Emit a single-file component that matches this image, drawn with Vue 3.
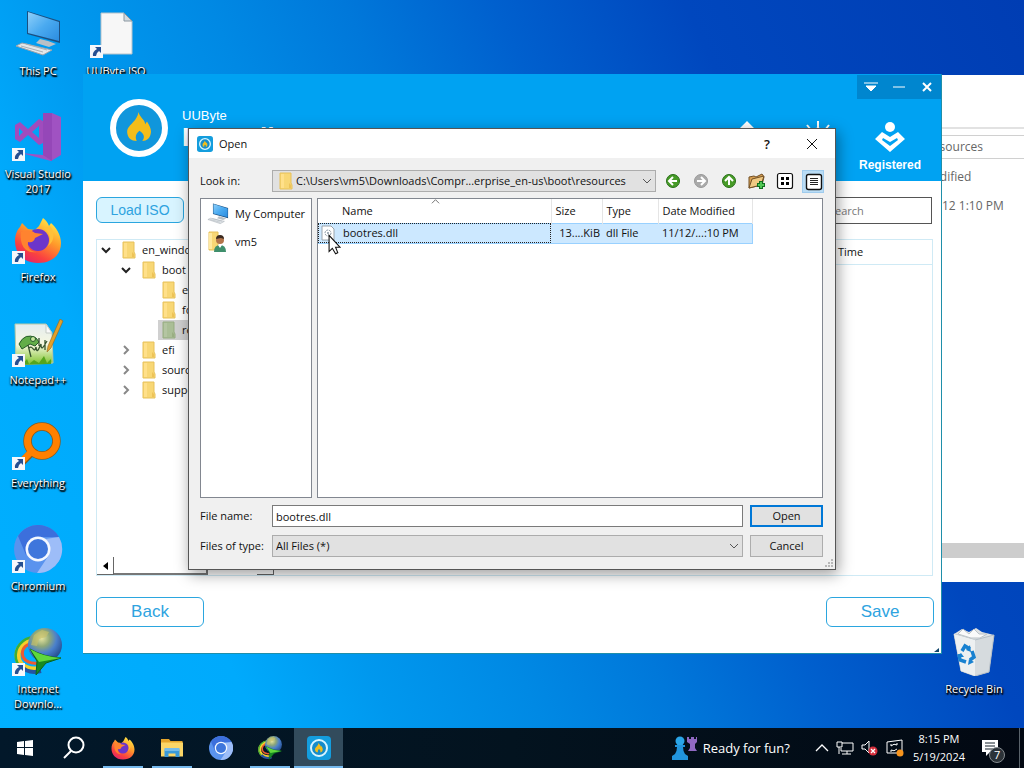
<script setup>
import { ref } from 'vue'

const path = ref('C:\\Users\\vm5\\Downloads\\Compr...erprise_en-us\\boot\\resources')
const fileName = ref('bootres.dll')
const fileType = ref('All Files (*)')
const search = ref('')

const shortcuts = [
  { icon: 'pc', label: 'This PC', link: false },
  { icon: 'vs', label: 'Visual Studio 2017', link: true },
  { icon: 'firefox', label: 'Firefox', link: true },
  { icon: 'notepad', label: 'Notepad++', link: true },
  { icon: 'everything', label: 'Everything', link: true },
  { icon: 'chromium', label: 'Chromium', link: true },
  { icon: 'idm', label: 'Internet Downlo...', link: true },
  { icon: 'page', label: 'UUByte ISO Editor', link: true }
]
const tree = [
  { name: 'en_windows', level: 0, state: 'open' },
  { name: 'boot', level: 1, state: 'open' },
  { name: 'en-us', level: 2, state: '' },
  { name: 'fonts', level: 2, state: '' },
  { name: 'resources', level: 2, state: '', selected: true },
  { name: 'efi', level: 1, state: 'closed' },
  { name: 'sources', level: 1, state: 'closed' },
  { name: 'support', level: 1, state: 'closed' }
]
const apps = [
  { icon: 'firefox', title: 'Firefox', running: true },
  { icon: 'explorer', title: 'File Explorer', running: true },
  { icon: 'chromium', title: 'Chromium', running: false },
  { icon: 'idm', title: 'Internet Download Manager', running: true },
  { icon: 'uubyte', title: 'UUByte ISO Editor', running: true, active: true }
]
</script>

<template>
  <svg class="defs" width="0" height="0" aria-hidden="true">
    <defs>
      <linearGradient id="gFox" x1="0.8" y1="0" x2="0.2" y2="1">
        <stop offset="0" stop-color="#fff04a" /><stop offset="0.4" stop-color="#ff9a2a" />
        <stop offset="0.75" stop-color="#fa4040" /><stop offset="1" stop-color="#e02070" />
      </linearGradient>
      <radialGradient id="gGlobe" cx="0.4" cy="0.3" r="0.8">
        <stop offset="0" stop-color="#e9e6a0" /><stop offset="0.3" stop-color="#8fa878" />
        <stop offset="0.55" stop-color="#4a80cc" /><stop offset="1" stop-color="#173a78" />
      </radialGradient>
      <linearGradient id="gScreen" x1="0" y1="0" x2="1" y2="1">
        <stop offset="0" stop-color="#8fd0fa" /><stop offset="0.5" stop-color="#4aaaf0" /><stop offset="1" stop-color="#2b8ce0" />
      </linearGradient>
      <linearGradient id="gNote" x1="0" y1="0" x2="0" y2="1">
        <stop offset="0" stop-color="#e4ecf0" /><stop offset="0.5" stop-color="#f6f8e0" /><stop offset="1" stop-color="#7cc22a" />
      </linearGradient>
    </defs>
    <symbol id="pc" viewBox="0 0 48 48">
      <path d="M13 1 46 11v22L13 24z" fill="#1b4f80" />
      <path d="M14 2 45 12v19L14 23z" fill="url(#gScreen)" />
      <path d="M26 29 34 31 42 34 35 37 22 33z" fill="#b9c0c6" />
      <path d="M8 33 38 40 29 45 2 36z" fill="#e3e7ea" stroke="#9aa3ab" />
      <path d="m7 36 22 6m-17-8 21 6" stroke="#a8b0b6" fill="none" />
    </symbol>
    <symbol id="page" viewBox="0 0 48 48">
      <path d="M9 3h23l8 8v33H9z" fill="#f7f7f7" stroke="#b6c3cb" />
      <path d="M32 3v8h8z" fill="#d5dbe0" stroke="#8b98a2" />
    </symbol>
    <symbol id="vs" viewBox="0 0 48 48">
      <path d="M29 0h9l9 4v38l-10 6L7 40l22 2 4-4V4z" fill="#a052c2" />
      <path d="M29 0h9v48l-9-6z" fill="#9547b8" />
      <path d="M1 12 6 9l8 7L25 6l4 2v22l-4 2-11-10-8 7-5-3zm4 3v8l4-4zm13 4 7 6V13z" fill="#a04cbd" fill-rule="evenodd" />
    </symbol>
    <symbol id="firefox" viewBox="0 0 48 48">
      <path d="M24 47C9 47 1 37 1 25c0-6 2-11 5-14l2-4 6 6 7 1 4-4 4-8c3 2 5 5 6 8l2-3c5 4 10 12 10 20 0 12-9 20-23 20z" fill="url(#gFox)" />
      <circle cx="24" cy="24" r="11" fill="#6c35ca" />
      <path d="M7 16c6-3 11-2 14 1l8 1-8 4c-1 4-4 5-7 4-1 6 3 10 9 10-10 2-18-5-16-20z" fill="#ff832f" />
      <path d="M29 12c7 3 9 12 5 18 8-6 6-16 2-20z" fill="#ffc03a" />
    </symbol>
    <symbol id="notepad" viewBox="0 0 48 48">
      <path d="M1 5h31l6 9 1 30-37 2z" fill="url(#gNote)" stroke="#b9c9a6" />
      <path d="M32 5v9h6z" fill="#fafafa" stroke="#c5cbc4" />
      <path d="M5 25q6-12 17-6l3 4-4 4-5-2-8 5z" fill="#62ad48" stroke="#245b27" />
      <circle cx="19" cy="20" r="2.5" fill="#c8e89d" stroke="#275b2b" />
      <path d="m14 26 3 12m-2-9c4-4 5 7 7-1 1 8 3 1 5-3 0 8 3 2 6-3m-2-1v10m-6-12v8" fill="none" stroke="#35532e" stroke-width="1.3" />
      <path d="m4 46 2-8 3 7 4-5 2 5 5-4 5 3 5-7 3 7 4-4v5z" fill="#55a51e" />
      <path d="m46 0 3 2-12 27-4 4 1-6z" fill="#e2a02a" stroke="#94631f" stroke-width="0.6" />
    </symbol>
    <symbol id="everything" viewBox="0 0 48 48">
      <circle cx="28" cy="19" r="14.5" fill="none" stroke="#8a5a1d" stroke-width="8.5" />
      <path d="m18 30-11 11" stroke="#8a5a1d" stroke-width="8" />
      <circle cx="28" cy="19" r="14.5" fill="none" stroke="#ff8000" stroke-width="7" />
      <path d="m18 29-12 12" stroke="#ff8000" stroke-width="6.5" />
    </symbol>
    <symbol id="chromium" viewBox="0 0 48 48">
      <circle cx="24" cy="24" r="24" fill="#5a93ee" />
      <path d="M4 11A24 24 0 0 1 45 12H24L12 30z" fill="#3c6fdc" />
      <path d="M45 12A24 24 0 0 1 23 48l12-18-4-16z" fill="#9dbdf8" />
      <circle cx="24" cy="24" r="12.5" fill="#f4f8ff" />
      <circle cx="24" cy="24" r="10" fill="#3e76dc" />
    </symbol>
    <symbol id="idm" viewBox="0 0 48 48">
      <path d="M21 12C8 13 2 21 4 31c2 8 12 12 22 10" fill="none" stroke="#f4d02b" stroke-width="6" />
      <path d="M20 9C8 10 0 20 2 31c1 5 5 9 10 11" fill="none" stroke="#3eae36" stroke-width="2.5" />
      <path d="M19 15C10 17 7 22 9 29c2 4 8 7 14 6" fill="none" stroke="#ec5b32" stroke-width="3" />
      <path d="M7 38c5 6 12 7 20 5" fill="none" stroke="#2453a3" stroke-width="4" />
      <circle cx="31" cy="17" r="17" fill="url(#gGlobe)" />
      <path d="m20 7 8-5 7 2-3 5-7 2-2 7-6-1z" fill="#c8c06a" opacity="0.65" />
      <path d="M16 21q14 8 31 9l-15 5-10 12 1-14z" fill="#178a22" stroke="#0b641d" />
      <path d="M16 21q14 8 31 9l-22 4z" fill="#5fd83c" />
    </symbol>
    <symbol id="bin" viewBox="0 0 48 48">
      <path d="m4 6 8-5 7 3 7-4 6 4 12 3-5 37-14 4-14-5z" fill="#e0e3e5" />
      <path d="m4 6 21 6 19-5-5 37-14 4-14-5z" fill="#d6dbde" stroke="#b6bfc6" />
      <path d="m4 6 21 6v36l-14-5z" fill="#edf0f1" />
      <path d="m8 6 5-5 6 5 5-5 5 5 8 0-7 4-9 0z" fill="#fafafa" stroke="#bcc3c8" />
      <path d="m12 23 3-5 5 3m2 2 2 6-4 3m-4 2-6-2-1-6" stroke="#1881d0" stroke-width="3.5" fill="none" />
      <path d="m20 17 1 7-5-2zm-1 14-1 6 6-3zM7 29l4-4 3 4z" fill="#1881d0" />
    </symbol>
    <symbol id="shortcut" viewBox="0 0 13 13">
      <path d="M0 0h13v13H0z" fill="#f5f7fb" />
      <path d="M5 2h6v6L9 6Q6 8 6 11H3Q2 7 7 4z" fill="#264f91" />
    </symbol>
    <symbol id="folder" viewBox="0 0 14 18">
      <path d="M1 1h11v10l1 2v4H1z" fill="#f8d775" stroke="#e7c15a" />
      <path d="M2 2h3v14H2z" fill="#ffe08a" />
      <path d="M10 11v5h2v-3z" fill="#edc358" />
    </symbol>
    <symbol id="explorer" viewBox="0 0 48 48">
      <path d="M2 6h16l3 4h24v12H2z" fill="#e5a52b" />
      <path d="M2 13h44v28H2z" fill="#fbd667" />
      <path d="M9 27h30v15h-8v-7H17v7H9z" fill="#3a9ad9" />
      <path d="M9 24h30v6H9z" fill="#76bce8" />
    </symbol>
    <symbol id="uubyte" viewBox="0 0 48 48">
      <rect width="48" height="48" rx="8" fill="#149ddd" />
      <circle cx="24" cy="24" r="16" fill="#168cca" stroke="#d8f5ff" stroke-width="4" />
      <use href="#flame" x="16" y="13" width="16" height="21" />
    </symbol>
    <symbol id="flame" viewBox="0 0 26 32">
      <path d="M12 0c1 6 7 8 7 13l2-3c3 5 5 9 4 13-1 5-4 8-9 8 3-4 2-8-3-11-4 3-5 7-3 11-6 0-9-3-10-8-1-6 3-8 6-12 3-3 5-6 6-11z" fill="#f2bd1a" />
    </symbol>
    <symbol id="chevron" viewBox="0 0 10 10">
      <path d="m1 3 4 4 4-4" fill="none" stroke="currentColor" />
    </symbol>
  </svg>

  <div class="screen">
    <main class="desktop">
      <div class="icons">
        <button v-for="s in shortcuts" :key="s.label" class="icon">
          <span class="art">
            <svg class="pic"><use :href="'#' + s.icon" /></svg>
            <svg v-if="s.link" class="arrow"><use href="#shortcut" /></svg>
          </span>
          <span class="label">{{ s.label }}</span>
        </button>
      </div>
      <button class="icon bin">
        <span class="art"><svg class="pic"><use href="#bin" /></svg></span>
        <span class="label">Recycle Bin</span>
      </button>

      <section class="explorer">
        <div class="ribbon"></div>
        <div class="address"><span>resources</span></div>
        <div class="dates">
          <span>Date modified</span>
          <span>11/12/2012 1:10 PM</span>
        </div>
        <div class="hbar"></div>
      </section>

      <section class="editor">
        <header class="head">
          <svg class="logo" viewBox="0 0 58 58">
            <circle cx="29" cy="29" r="26" fill="#1096dc" stroke="#fff" stroke-width="6" />
            <use href="#flame" x="17" y="13" width="25" height="30" />
          </svg>
          <div class="brand">
            <span>UUByte</span>
            <strong>ISO Editor</strong>
          </div>
          <div class="actions">
            <div class="links">
              <svg width="34" height="34" viewBox="0 0 34 34"><path d="m17 0 12 12h-7v12H12V12H5z" fill="#fff" /></svg>
              <svg width="34" height="34" viewBox="0 0 34 34">
                <circle cx="17" cy="17" r="8" fill="none" stroke="#fff" stroke-width="5" />
                <path d="M17 0v7M17 27v7M0 17h7m20 0h7M6 4l4 5m14 16 4 5M28 4l-4 5M10 25l-4 5" stroke="#fff" stroke-width="2" />
              </svg>
            </div>
            <div class="registered">
              <svg width="30" height="32" viewBox="0 0 30 32">
                <circle cx="15" cy="6" r="5" fill="#fff" />
                <path d="m7 11 8 5 8-5 7 7-15 13L0 18zm1 6-1 2 8 6 8-6-1-2-7 4z" fill="#fff" fill-rule="evenodd" />
              </svg>
              <span>Registered</span>
            </div>
          </div>
          <div class="wincontrols">
            <button aria-label="Menu"><svg viewBox="0 0 14 12"><path d="M0 2h14M2 5h10l-5 5z" fill="#fff" stroke="#fff" /></svg></button>
            <button aria-label="Minimize"><svg viewBox="0 0 14 12"><path d="M1 6h12" stroke="#fff" /></svg></button>
            <button aria-label="Close"><svg viewBox="0 0 14 12"><path d="m3 2 8 8m0-8-8 8" stroke="#fff" stroke-width="2" /></svg></button>
          </div>
        </header>
        <div class="work">
          <div class="row">
            <button class="blue load">Load ISO</button>
            <input v-model="search" class="search" aria-label="Search" placeholder="Search">
          </div>
          <div class="panes">
            <div class="treepane">
              <ul class="tree">
                <li v-for="n in tree" :key="n.name" :class="['l' + n.level, { selected: n.selected }]">
                  <svg v-if="n.state" :class="['twist', n.state]"><use href="#chevron" /></svg>
                  <span class="node"><svg class="folder"><use href="#folder" /></svg>{{ n.name }}</span>
                </li>
              </ul>
              <div class="scroll">
                <span class="sbtn"><svg width="5" height="8" viewBox="0 0 5 8"><path d="M5 0v8L0 4z" /></svg></span>
                <span class="thumb"></span>
                <span class="sbtn right"></span>
              </div>
            </div>
            <div class="files"><div class="fileshead"><span>Time</span></div></div>
          </div>
          <div class="row">
            <button class="blue big">Back</button>
            <button class="blue big">Save</button>
          </div>
        </div>
        <svg class="corner" viewBox="0 0 5 4"><path d="M5 0v4H0z" fill="#12466b" /></svg>
      </section>

      <section class="dialog" role="dialog" aria-label="Open">
        <header class="title">
          <svg class="appicon"><use href="#uubyte" /></svg>
          <span>Open</span>
          <button class="help" aria-label="Help">?</button>
          <button class="close" aria-label="Close"><svg width="12" height="12" viewBox="0 0 12 12"><path d="m1 1 10 10m0-10L1 11" stroke="#111" /></svg></button>
        </header>
        <div class="body">
          <div class="look">
            <label for="lookin">Look in:</label>
            <div class="combo path">
              <svg class="folder"><use href="#folder" /></svg>
              <select id="lookin" v-model="path"><option>{{ path }}</option></select>
              <svg class="down"><use href="#chevron" /></svg>
            </div>
            <div class="tools">
              <button aria-label="Back"><svg viewBox="0 0 20 20"><circle cx="10" cy="10" r="6.5" fill="#479b27" stroke="#286f18" /><path d="M10 6 6 10l4 4m-4-4h8" stroke="#fff" stroke-width="2" fill="none" /></svg></button>
              <button aria-label="Forward"><svg viewBox="0 0 20 20"><circle cx="10" cy="10" r="6.5" fill="#aaa" stroke="#999" /><path d="m10 6 4 4-4 4m4-4H6" stroke="#fff" stroke-width="2" fill="none" /></svg></button>
              <button aria-label="Parent Directory"><svg viewBox="0 0 20 20"><circle cx="10" cy="10" r="6.5" fill="#479b27" stroke="#286f18" /><path d="m6 10 4-4 4 4m-4-4v8" stroke="#fff" stroke-width="2" fill="none" /></svg></button>
              <button aria-label="Create New Folder"><svg viewBox="0 0 20 20"><path d="M2 17V6l5-1 2 1 6-3 2 3-2 8z" fill="#d9a052" stroke="#725026" /><path d="M2 17 5 8l12-3-3 9z" fill="#f0c982" stroke="#725026" /><path d="M14 10v8m-4-4h8" stroke="#126e20" stroke-width="4" /><path d="M14 11v6m-3-3h6" stroke="#52c756" stroke-width="2" /></svg></button>
              <button aria-label="List View"><svg viewBox="0 0 20 20"><rect x="2.5" y="2.5" width="15" height="15" rx="2" fill="#fff" stroke="#111" stroke-width="1.2" /><path d="M6 6h3v3H6zm5 0h3v3h-3zm-5 5h3v3H6zm5 0h3v3h-3z" /></svg></button>
              <button class="on" aria-label="Detail View"><svg viewBox="0 0 20 20"><rect x="3.5" y="3.5" width="15" height="15" rx="2" fill="#fff" stroke="#111" stroke-width="1.4" /><path d="M7 7.5h8m-8 2h8m-8 2h8m-8 2h8" stroke="#222" /></svg></button>
            </div>
          </div>
          <div class="lists">
            <ul class="places">
              <li><svg viewBox="0 0 48 48"><use href="#pc" /></svg>My Computer</li>
              <li>
                <svg viewBox="0 0 22 22">
                  <path d="M2 1h9v18H2z" fill="#f8d775" stroke="#e7c15a" /><path d="M2 2h3v16H2z" fill="#ffe9a0" />
                  <circle cx="13" cy="9" r="4" fill="#b3744a" /><path d="M9 8q0-4 4-4t4 4l-3-1z" fill="#3c2a20" />
                  <path d="M7 21q0-7 6-7t6 7z" fill="#3f8f6c" /><path d="m11 14 2 3 2-3z" fill="#fff" />
                </svg>vm5
              </li>
            </ul>
            <div class="listing">
              <svg class="sort"><use href="#chevron" /></svg>
              <table>
                <colgroup><col class="cname"><col class="csize"><col class="ctype"><col class="cdate"></colgroup>
                <thead><tr><th>Name</th><th>Size</th><th>Type</th><th>Date Modified</th></tr></thead>
                <tbody>
                  <tr>
                    <td><svg width="14" height="16" viewBox="0 0 14 16"><path d="M1 1h9l3 3v11H1z" fill="#fff" stroke="#9aa4ac" /><circle cx="7" cy="8" r="3" fill="none" stroke="#8795a0" stroke-dasharray="2 1" /><circle cx="7" cy="8" r="1" fill="#8795a0" /></svg>bootres.dll</td>
                    <td>13....KiB</td>
                    <td>dll File</td>
                    <td>11/12/...:10 PM</td>
                  </tr>
                </tbody>
              </table>
            </div>
          </div>
          <div class="fields">
            <label for="fname">File name:</label>
            <input id="fname" v-model="fileName">
            <button class="push primary">Open</button>
            <label for="ftype">Files of type:</label>
            <div class="combo">
              <select id="ftype" v-model="fileType"><option>{{ fileType }}</option></select>
              <svg class="down"><use href="#chevron" /></svg>
            </div>
            <button class="push">Cancel</button>
          </div>
        </div>
        <svg class="grip" viewBox="0 0 9 9"><path d="M7 1h2v2H7zM4 4h2v2H4zm3 0h2v2H7zM1 7h2v2H1zm3 0h2v2H4zm3 0h2v2H7z" fill="#b8b8b8" /></svg>
      </section>

      <svg class="cursor" viewBox="0 0 12 19"><path d="M1 1v15l3-3 3 5 2-1-2-5h4z" fill="#fff" stroke="#111" /></svg>
    </main>

    <footer class="taskbar">
      <button class="start" aria-label="Start"><svg width="18" height="18" viewBox="0 0 18 18"><path d="m1 3 7-1v6H1zm8-1 8-1v7H9zM1 9h7v7l-7-1zm8 0h8v8l-8-1z" fill="#fff" /></svg></button>
      <button class="task" aria-label="Search"><svg width="24" height="24" viewBox="0 0 24 24"><circle cx="14" cy="9" r="7.5" fill="none" stroke="#fff" stroke-width="2" /><path d="m9 15-7 7" stroke="#fff" stroke-width="2" /></svg></button>
      <button v-for="a in apps" :key="a.title" :class="['task', { running: a.running, active: a.active }]" :aria-label="a.title">
        <svg width="24" height="24"><use :href="'#' + a.icon" /></svg>
      </button>
      <div class="tray">
        <button class="news">
          <svg width="26" height="26" viewBox="0 0 26 26">
            <path d="M16 2h2v2h2V2h3v2h2V2h1v5l-2 2v4l2 3h-9l2-3V9l-3-2z" fill="#9069c2" />
            <circle cx="9" cy="6" r="4.5" fill="#2aa5e8" />
            <path d="M4 10h10v2h-2q0 4 2 7l3 2v4H1v-4l3-2q2-3 2-7H4z" fill="#2194dc" />
          </svg>
          Ready for fun?
        </button>
        <button aria-label="Show hidden icons"><svg width="14" height="16" viewBox="0 0 14 16"><path d="m1 11 6-6 6 6" fill="none" stroke="#fff" stroke-width="1.3" /></svg></button>
        <button aria-label="Network"><svg width="18" height="16" viewBox="0 0 18 16"><path d="M6 3h11v8H5V8m-4-6h5v5H1zm2 5v7m8-3v3m-5 0h9" fill="none" stroke="#fff" /></svg></button>
        <button aria-label="Volume"><svg width="18" height="16" viewBox="0 0 18 16"><path d="M1 5h3l4-4v12L4 9H1z" fill="none" stroke="#fff" /><circle cx="12" cy="11" r="4.5" fill="#d52f3c" /><path d="m10 9 4 4m0-4-4 4" stroke="#fff" stroke-width="1.3" /></svg></button>
        <button aria-label="Update"><svg width="18" height="18" viewBox="0 0 18 18"><path d="M1 3 16 1v14l-4-1H1z" fill="none" stroke="#fff" /><path d="M5 7q3-3 6-1V4m0 6q-3 3-6 1v2m0-6V5" fill="none" stroke="#fff" /><circle cx="14" cy="14" r="3.5" fill="#f7941d" /></svg></button>
        <div class="clock"><span>8:15 PM</span><span>5/19/2024</span></div>
        <button class="notes" aria-label="Notifications">
          <svg width="26" height="32" viewBox="0 0 26 32"><path d="M2 8h16v12h-8l-4 4v-4H2z" fill="#fff" /><path d="M5 11h10M5 14h10M5 17h8" stroke="#14202a" /><circle cx="17" cy="23" r="7.5" fill="#2b3238" stroke="#858b90" /></svg>
          <span class="count">7</span>
        </button>
      </div>
    </footer>
  </div>
</template>

<style>
body{
  margin:0;
  overflow:hidden;
}
</style>

<style scoped>
*{
  box-sizing:border-box;
}
.defs{
  position:absolute;
}
.screen{
  display:flex;
  flex-direction:column;
  height:100vh;
  font-family:"Open Sans", "Liberation Sans", sans-serif;
  font-size:11px;
  line-height:16px;
  color:#111;
}
button, input, select{
  font:inherit;
  color:inherit;
  margin:0;
  padding:0;
}
button{
  border:none;
  background:none;
}
ul{
  list-style:none;
  margin:0;
  padding:0;
}
.desktop{
  position:relative;
  flex:1;
  min-height:0;
  background:linear-gradient(65deg, #00b0ff 0%, #00aafc 19%, #0098ee 29%, #0089e4 40%, #0078da 50%, #0060ce 61%, #0047be 75%, #003db3 100%);
}

/* desktop icons */
.icons{
  display:grid;
  grid-auto-flow:column;
  grid-template-rows:repeat(7, 103px);
  grid-auto-columns:78px;
}
.icon{
  display:flex;
  flex-direction:column;
  align-items:center;
  gap:5px;
  width:76px;
  padding-top:10px;
  color:#fff;
}
.art{
  position:relative;
  width:52px;
  height:48px;
}
.pic{
  width:52px;
  height:48px;
}
.arrow{
  position:absolute;
  left:0;
  bottom:0;
  width:13px;
  height:13px;
}
.label{
  line-height:15px;
  text-shadow:1px 1px 2px #000, 0 1px 2px #000, 1px 2px 1px #000;
}
.bin{
  position:absolute;
  right:12px;
  bottom:7px;
  height:103px;
}

/* explorer window behind */
.explorer{
  position:absolute;
  top:75px;
  bottom:146px;
  left:560px;
  right:0;
  display:flex;
  flex-direction:column;
  background:#fff;
  color:#666;
  font-size:12px;
}
.ribbon{
  height:54px;
  border-bottom:2px solid #e2e2e2;
}
.address{
  display:flex;
  justify-content:flex-end;
  margin-top:6px;
  padding:3px 41px 3px 0;
  border:1px solid #d0d0d0;
  border-right:none;
}
.dates{
  display:grid;
  gap:13px;
  justify-content:end;
  padding-top:10px;
  grid-template-columns:132px;
}
.hbar{
  height:15px;
  margin:auto 0 24px;
  background:#cdcdcd;
}

/* iso editor window */
.editor{
  position:absolute;
  inset:74px 82px 74px 83px;
  display:flex;
  flex-direction:column;
  border-right:1px solid #1f8faa;
  border-bottom:1px solid #1f8faa;
  background:#fff;
}
.head{
  position:relative;
  display:flex;
  gap:14px;
  height:107px;
  padding:25px 20px 0 27px;
  background:#00a2f2;
  color:#fff;
}
.logo{
  width:58px;
  height:58px;
}
.brand{
  display:flex;
  flex-direction:column;
  padding-top:9px;
  font-family:"Liberation Sans", Arial, sans-serif;
  font-size:13px;
}
.brand strong{
  font-size:26px;
  line-height:26px;
}
.actions{
  display:flex;
  gap:24px;
  margin-left:auto;
  padding-top:22px;
}
.links{
  display:flex;
  gap:37px;
}
.registered{
  display:flex;
  flex-direction:column;
  align-items:center;
  gap:4px;
  font-family:"Liberation Sans", Arial, sans-serif;
  font-size:12px;
  font-weight:bold;
}
.wincontrols{
  position:absolute;
  top:1px;
  right:0;
  display:flex;
  justify-content:space-between;
  width:84px;
  padding:6px 7px;
  background:#0086cf;
}
.wincontrols button{
  height:12px;
}
.wincontrols svg{
  display:block;
  width:14px;
  height:12px;
}
.work{
  flex:1;
  min-height:0;
  display:flex;
  flex-direction:column;
  padding:16px 7px 26px 13px;
}
.row{
  display:flex;
  justify-content:space-between;
}
.blue{
  border:1px solid #2ba6df;
  border-radius:6px;
  background:#fff;
  color:#2ea3e0;
  font-family:"Liberation Sans", Arial, sans-serif;
}
.load{
  width:88px;
  height:26px;
  background:#d8f4ff;
  font-size:14px;
}
.big{
  width:108px;
  height:30px;
  font-size:17px;
}
.search{
  width:112px;
  height:27px;
  margin-right:2px;
  padding:0 8px;
  border:1px solid #555;
}
.search::placeholder{
  color:#777;
}
.panes{
  flex:1;
  min-height:0;
  display:flex;
  margin:15px 1px 21px 0;
  border:1px solid #cfeaf5;
}
.treepane{
  flex:0 0 177px;
  display:flex;
  flex-direction:column;
}
.tree{
  flex:1;
}
.tree li{
  display:flex;
  align-items:center;
  height:20px;
  padding-left:4px;
}
.tree .l1{
  padding-left:24px;
}
.tree .l2{
  padding-left:61px;
}
.twist{
  width:10px;
  height:10px;
  margin-right:7px;
  stroke-width:2;
  color:#222;
}
.twist.closed{
  transform:rotate(-90deg);
  color:#888;
}
.node{
  flex:1;
  display:flex;
  align-items:center;
  gap:6px;
  height:20px;
  padding-left:4px;
}
.selected .node{
  background:#d0d0d0;
}
.selected .folder{
  filter:hue-rotate(40deg) saturate(0.4) brightness(0.85);
}
.folder{
  flex:none;
  width:14px;
  height:18px;
}
.scroll{
  display:flex;
  justify-content:space-between;
  height:18px;
}
.sbtn{
  display:flex;
  align-items:center;
  justify-content:center;
  width:17px;
  border-right:1px solid #666;
  border-bottom:1px solid #666;
}
.thumb{
  width:94px;
  margin-right:auto;
  border-right:2px solid #777;
  border-bottom:2px solid #777;
}
.files{
  flex:1;
}
.fileshead{
  display:flex;
  justify-content:flex-end;
  height:25px;
  padding-top:4px;
  border-bottom:1px solid #cfeaf5;
}
.fileshead span{
  width:94px;
}
.corner{
  position:absolute;
  right:2px;
  bottom:1px;
  width:5px;
  height:4px;
}

/* open dialog */
.dialog{
  position:absolute;
  inset:128px 188px 158px 188px;
  display:flex;
  flex-direction:column;
  border:1px solid #555;
  background:#f0f0f0;
  box-shadow:2px 4px 14px rgba(0, 0, 0, 0.4);
}
.title{
  display:flex;
  align-items:center;
  gap:6px;
  height:29px;
  padding:0 17px 0 8px;
  background:#fff;
}
.appicon{
  width:16px;
  height:16px;
}
.help{
  margin-left:auto;
  font-size:13px;
  font-weight:600;
}
.close{
  display:flex;
  margin-left:30px;
}
.body{
  flex:1;
  min-height:0;
  display:flex;
  flex-direction:column;
  padding:12px 12px 12px 11px;
}
.look{
  display:flex;
  align-items:center;
  height:22px;
}
.look label{
  width:72px;
}
.combo{
  position:relative;
  display:flex;
  align-items:center;
  height:22px;
  border:1px solid #acacac;
  background:#e1e1e1;
}
.path{
  flex:1;
  gap:3px;
  padding-left:6px;
}
.combo select{
  flex:1;
  min-width:0;
  height:20px;
  padding-left:3px;
  border:none;
  background:none;
  appearance:none;
}
.path select{
  padding-left:0;
}
.down{
  position:absolute;
  right:3px;
  width:10px;
  height:10px;
  color:#555;
  pointer-events:none;
}
.tools{
  display:flex;
  gap:8px;
  margin-left:7px;
}
.tools button{
  width:20px;
  height:21px;
}
.tools svg{
  display:block;
  width:20px;
  height:20px;
}
.tools .on{
  background:#b9dcf5;
  outline:1px solid #9fcbed;
}
.lists{
  flex:1;
  min-height:0;
  display:flex;
  gap:5px;
  margin:6px 0 7px;
}
.places{
  width:112px;
  padding-top:1px;
  border:1px solid #828790;
  background:#fff;
  white-space:nowrap;
  overflow:hidden;
}
.places li{
  display:flex;
  align-items:center;
  gap:6px;
  height:28px;
  padding-left:6px;
}
.places svg{
  flex:none;
  width:22px;
  height:22px;
}
.listing{
  position:relative;
  flex:1;
  border:1px solid #828790;
  background:#fff;
}
.sort{
  position:absolute;
  left:113px;
  top:-2px;
  width:9px;
  height:9px;
  color:#666;
  transform:rotate(180deg);
}
table{
  table-layout:fixed;
  width:434px;
  border-collapse:collapse;
  white-space:nowrap;
}
.cname{
  width:233px;
}
.csize{
  width:51px;
}
.ctype{
  width:56px;
}
.cdate{
  width:94px;
}
th{
  height:24px;
  padding:0 4px;
  border-right:1px solid #e5e5e5;
  font-weight:normal;
  text-align:left;
}
th:first-child{
  padding-left:24px;
}
td{
  height:20px;
  padding:0 4px;
  border:1px solid #99d1ff;
  border-width:1px 0;
  background:#cce8ff;
}
td:first-child{
  padding-left:3px;
  outline:1px dotted #222;
  outline-offset:-1px;
}
td:nth-child(2){
  padding:0 2px;
  text-align:right;
}
td:last-child{
  border-right-width:1px;
}
td svg{
  margin-right:8px;
  vertical-align:-4px;
}
.fields{
  display:grid;
  grid-template-columns:72px 1fr 80px;
  row-gap:8px;
  align-items:center;
}
.fields input{
  height:22px;
  padding:0 3px;
  border:1px solid #7a7a7a;
  background:#fff;
}
.push{
  height:22px;
  margin-left:7px;
  border:1px solid #adadad;
  background:#e1e1e1;
}
.primary{
  border:2px solid #0078d7;
}
.grip{
  position:absolute;
  right:2px;
  bottom:2px;
  width:9px;
  height:9px;
}
.cursor{
  position:absolute;
  left:328px;
  top:234px;
  width:13px;
  height:21px;
}

/* taskbar */
.taskbar{
  display:flex;
  height:40px;
  background:linear-gradient(90deg, #02182a, #03131f 50%, #020812);
  color:#fff;
}
.start, .task{
  display:flex;
  align-items:center;
  justify-content:center;
  width:49px;
}
.task{
  position:relative;
}
.running::after{
  content:"";
  position:absolute;
  left:5px;
  right:4px;
  bottom:0;
  height:2px;
  background:#76b9ed;
}
.active{
  background:#324b5c;
}
.active::after{
  left:0;
  right:0;
}
.tray{
  display:flex;
  align-items:center;
  gap:7px;
  margin-left:auto;
  padding-right:4px;
}
.tray button{
  display:flex;
  align-items:center;
}
.tray .news{
  gap:6px;
  margin-right:18px;
  font-size:13px;
}
.clock{
  display:flex;
  flex-direction:column;
  align-items:center;
  margin-left:2px;
  line-height:18px;
}
.tray .notes{
  position:relative;
  height:40px;
  margin-left:8px;
  padding-right:13px;
  border-right:1px solid #5a636b;
}
.count{
  position:absolute;
  left:14px;
  top:19px;
}
</style>
